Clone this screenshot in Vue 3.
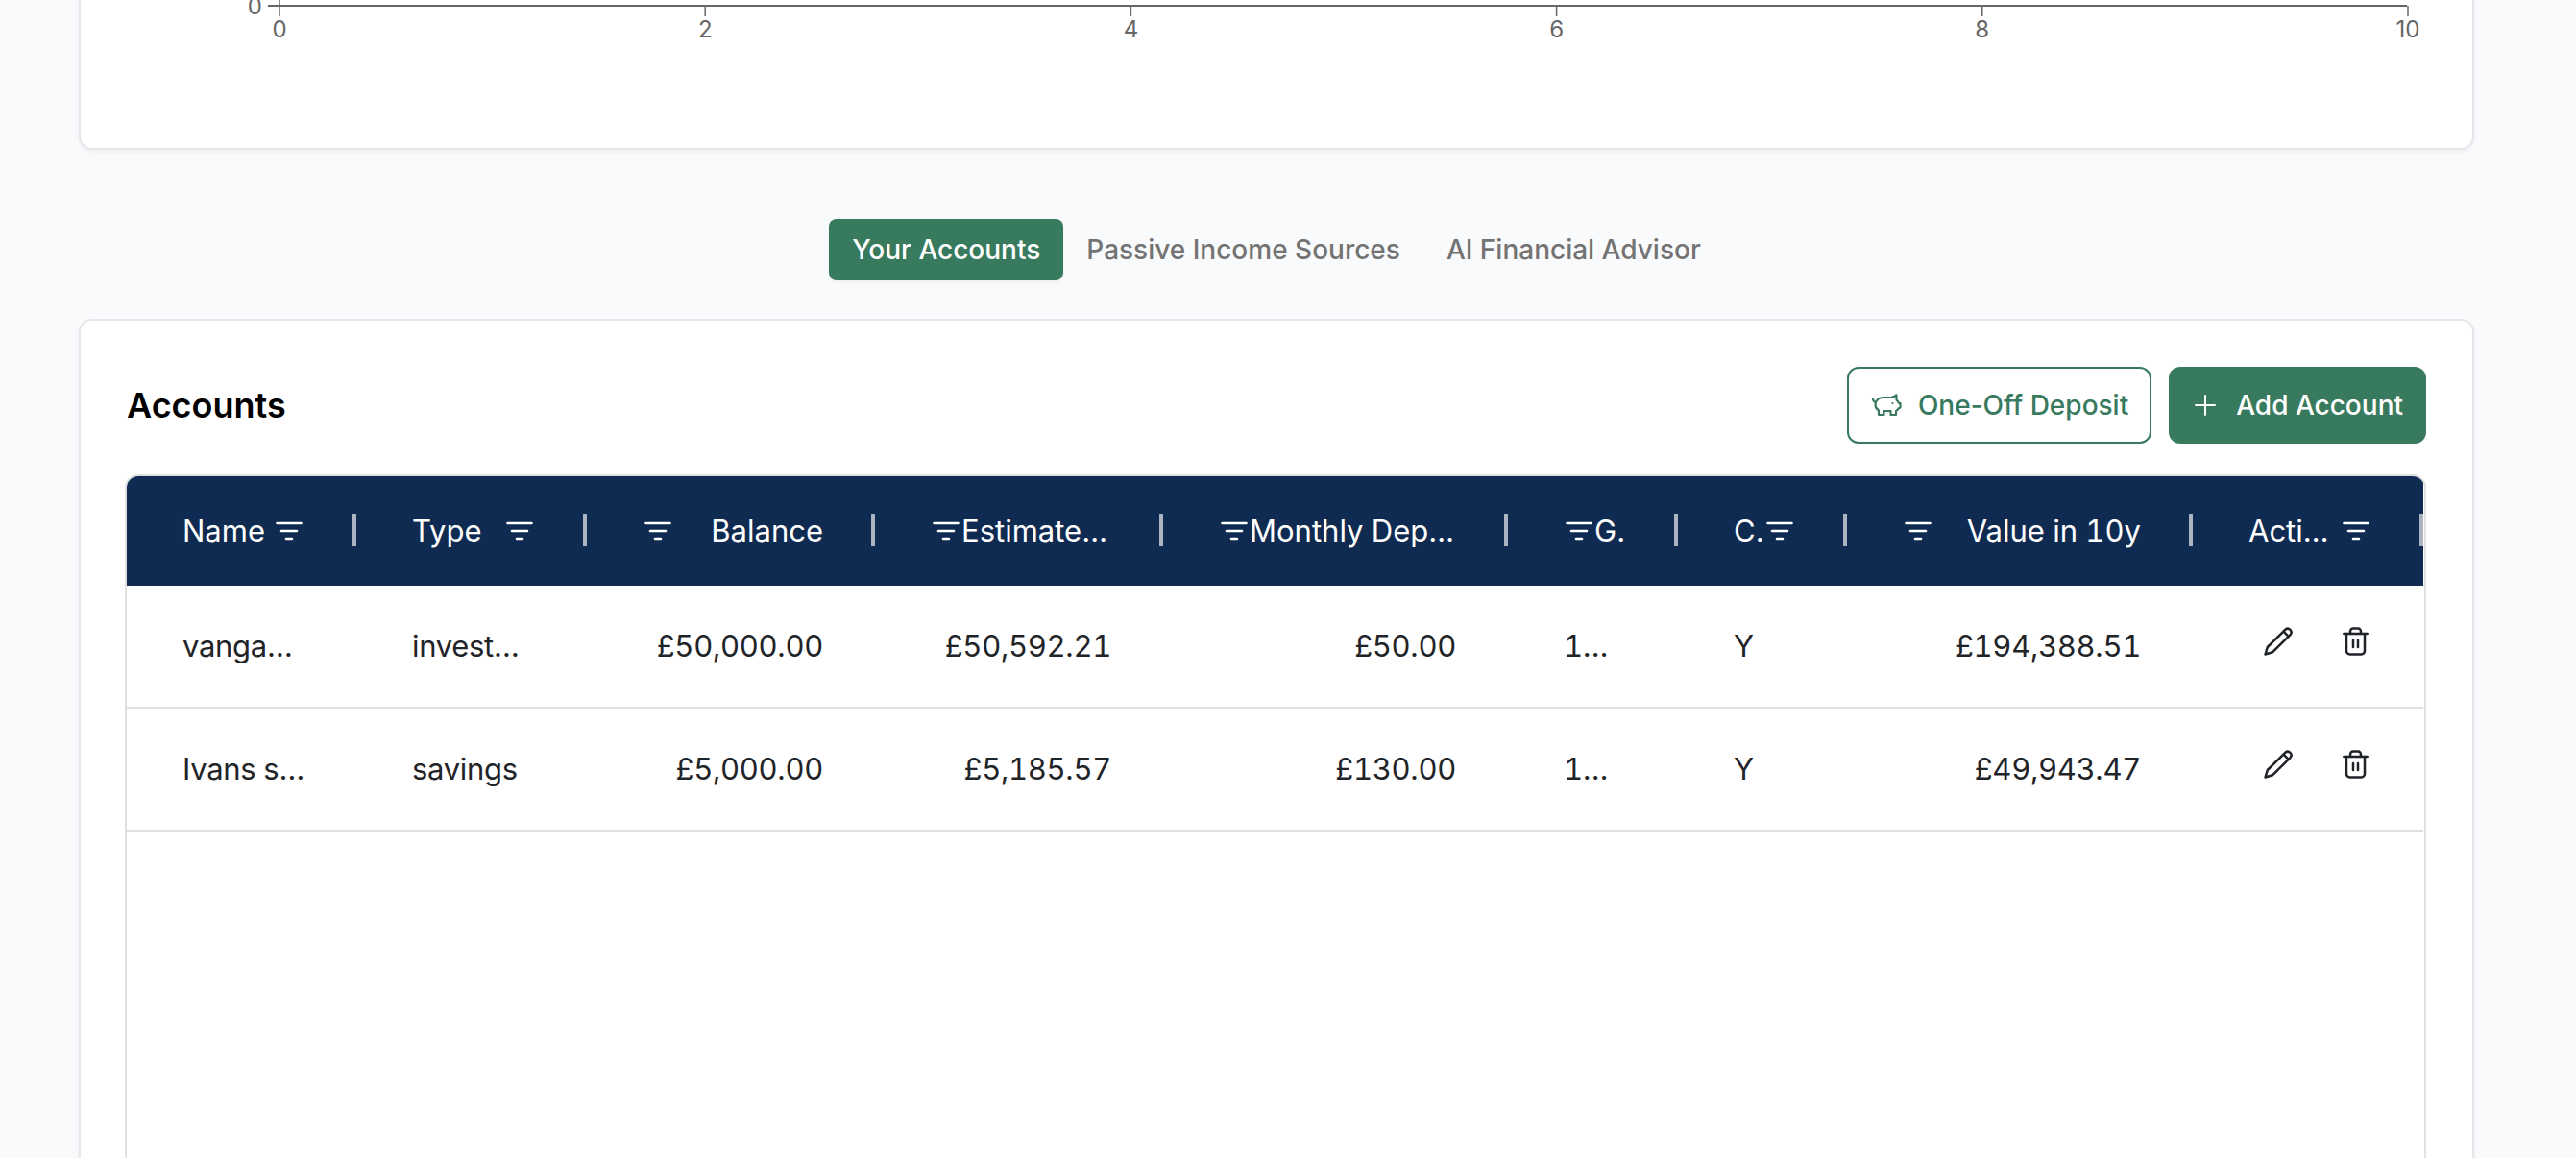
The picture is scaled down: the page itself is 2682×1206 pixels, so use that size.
<template>
  <div class="page">
    <section class="card chart-card">
      <svg class="chart" width="2490" height="60" viewBox="0 0 2490 60">
        <line x1="195" y1="24" x2="2422" y2="24" class="axis" />
        <line x1="207" y1="0" x2="207" y2="24" class="tick" />
        <text x="189" y="33" text-anchor="end" class="tick-label">0</text>
        <g v-for="(t, i) in xTicks" :key="t">
          <line :x1="207 + i * 443.2" y1="24" :x2="207 + i * 443.2" y2="35" class="tick" />
          <text :x="207 + i * 443.2" y="57" text-anchor="middle" class="tick-label">{{ t }}</text>
        </g>
      </svg>
    </section>

    <nav class="tabs">
      <button v-for="tab in tabs" :key="tab" class="tab" :class="{ active: tab === activeTab }">{{ tab }}</button>
    </nav>

    <section class="card accounts-card">
      <div class="accounts-head">
        <h2>Accounts</h2>
        <div class="actions">
          <button class="btn outline">
            <svg width="34" height="24" viewBox="-2 -1 34 24" fill="none" stroke="currentColor" stroke-width="2.200" stroke-linecap="round" stroke-linejoin="round">
              <path d="M25.500 1v4.500c1 1 2 2 2.500 3.500h1.500v4.500l-2 1c-.5 1-1.500 2-2.500 2.500v4h-5.500v-4h-7v4H7v-4.500c-2.500-1.500-3.500-3.500-3.500-6 0-4 3.500-7.500 7.500-7.500h8c2 0 4.500-1 6.500-2.500z" />
              <path d="M1 4c0 2 1 3.500 2.800 4" />
              <path d="M21.500 9v.01" />
            </svg>
            One-Off Deposit
          </button>
          <button class="btn solid">
            <svg width="22" height="22" viewBox="0 0 22 22" fill="none" stroke="currentColor" stroke-width="2" stroke-linecap="round">
              <path d="M11 1v20M1 11h20" />
            </svg>
            Add Account
          </button>
        </div>
      </div>

      <div class="table-wrap">
        <table>
          <colgroup>
            <col v-for="c in columns" :key="c.label" :style="{ width: c.width + 'px' }" />
          </colgroup>
          <thead>
            <tr>
              <th v-for="c in columns" :key="c.label" :class="{ right: c.right }">
                <div class="th-inner">
                  <span class="th-label">{{ c.label }}</span>
                  <svg class="filter" width="28" height="20" viewBox="0 0 28 20" fill="none" stroke="currentColor" stroke-width="2.600" stroke-linecap="round">
                    <path d="M1.500 2h25M6 10h16M11 18h6" />
                  </svg>
                </div>
              </th>
            </tr>
          </thead>
          <tbody>
            <tr v-for="row in rows" :key="row.name">
              <td class="name"><span class="cell">{{ row.name }}</span></td>
              <td><span class="cell">{{ row.type }}</span></td>
              <td class="num"><span class="cell">{{ row.balance }}</span></td>
              <td class="num"><span class="cell">{{ row.estimated }}</span></td>
              <td class="num"><span class="cell">{{ row.monthly }}</span></td>
              <td><span class="cell">{{ row.growth }}</span></td>
              <td><span class="cell">Y</span></td>
              <td class="num"><span class="cell">{{ row.value }}</span></td>
              <td class="row-actions">
                <div class="icons">
                  <svg width="30" height="30" viewBox="0 0 30 30" fill="none" stroke="currentColor" stroke-width="2.500" stroke-linejoin="round" stroke-linecap="round">
                    <path d="M1.500 28.500 3.800 21 22.500 2.600a3.700 3.700 0 0 1 5.200 5.200L9 26.300z" />
                    <path d="M20.500 4.600l5.200 5.200" />
                  </svg>
                  <svg width="27" height="30" viewBox="0 0 27 30" fill="none" stroke="currentColor" stroke-width="2.500" stroke-linecap="round" stroke-linejoin="round">
                    <path d="M1.300 7h24.400" />
                    <path d="M8 7V4.500a3 3 0 0 1 3-3h5a3 3 0 0 1 3 3V7" />
                    <path d="M4 7v18a3.500 3.500 0 0 0 3.500 3.500h12a3.500 3.500 0 0 0 3.500-3.500V7" />
                    <path d="M11 14v7M16 14v7" />
                  </svg>
                </div>
              </td>
            </tr>
          </tbody>
        </table>
      </div>
    </section>
  </div>
</template>

<script setup>
const xTicks = [0, 2, 4, 6, 8, 10];
const tabs = ['Your Accounts', 'Passive Income Sources', 'AI Financial Advisor'];
const activeTab = 'Your Accounts';

const columns = [
  { label: 'Name', width: 239 },
  { label: 'Type', width: 240 },
  { label: 'Balance', width: 300, right: true },
  { label: 'Estimated Balance', width: 300, right: true },
  { label: 'Monthly Deposit', width: 359, right: true },
  { label: 'Growth', width: 177, right: true },
  { label: 'Contributing', width: 176 },
  { label: 'Value in 10y', width: 360, right: true },
  { label: 'Actions', width: 240 },
];

const rows = [
  {
    name: 'vangaurd',
    type: 'investment',
    balance: '£50,000.00',
    estimated: '£50,592.21',
    monthly: '£50.00',
    growth: '12.00%',
    value: '£194,388.51',
  },
  {
    name: 'Ivans savings',
    type: 'savings',
    balance: '£5,000.00',
    estimated: '£5,185.57',
    monthly: '£130.00',
    growth: '15.00%',
    value: '£49,943.47',
  },
];
</script>

<style>
html,
body {
  margin: 0;
  height: 1206px;
  overflow: hidden;
  background: #f9fafb;
}
</style>

<style scoped>
.page {
  padding: 0 106px 0 82px;
  font-family: Inter, 'Liberation Sans', sans-serif;
}

.card {
  background: #fff;
  border: 2px solid #e5e7eb;
  border-radius: 14px;
  box-shadow: 0 2px 4px rgba(0, 0, 0, 0.05);
}

.chart-card {
  margin-top: -20px;
  height: 172px;
}

.chart {
  display: block;
}

.axis {
  stroke: #666;
  stroke-width: 2;
}

.tick {
  stroke: #666;
  stroke-width: 1.5;
}

.tick-label {
  fill: #666;
  font-size: 24px;
}

.tabs {
  display: flex;
  justify-content: center;
  margin: 72px 0 40px;
}

.tab {
  height: 64px;
  padding: 0 24px;
  border: 0;
  border-radius: 8px;
  background: transparent;
  color: #737373;
  font: 500 28px Inter, sans-serif;
}

.tab.active {
  background: #387a5d;
  color: #fff;
  box-shadow: 0 2px 4px rgba(0, 0, 0, 0.05);
}

.accounts-card {
  padding: 48px 48px 0 46px;
  height: 1000px;
}

.accounts-head {
  display: flex;
  justify-content: space-between;
  align-items: center;
  margin-bottom: 32px;
  padding-left: 2px;
}

h2 {
  margin: 0;
  font-size: 36px;
  font-weight: 600;
  color: #000;
}

.actions {
  display: flex;
  gap: 18px;
}

.btn {
  display: flex;
  align-items: center;
  height: 80px;
  border-radius: 12px;
  font: 500 28px Inter, sans-serif;
  box-sizing: border-box;
}

.outline {
  gap: 16px;
  padding: 0 22px;
  border: 2px solid #387a5d;
  background: #fff;
  color: #387a5d;
}

.solid {
  gap: 21px;
  padding: 0 24px 0 27px;
  border: 0;
  background: #387a5d;
  color: #fff;
}

.table-wrap {
  border: 2px solid #e0e0e0;
  border-radius: 14px 14px 0 0;
  overflow: hidden;
  height: 900px;
  box-sizing: border-box;
}

table {
  border-collapse: collapse;
  table-layout: fixed;
  width: 2391px;
  color: #1f2429;
  font-size: 31px;
  font-variant-numeric: tabular-nums;
}

thead tr {
  background: #0f2b52;
  color: #fff;
}

th {
  position: relative;
  height: 114px;
  padding: 0 56px 0 58px;
  font-weight: 400;
  text-align: left;
}

th.right {
  padding: 0 54px 0 60px;
}

th::after {
  content: '';
  position: absolute;
  right: 0;
  top: 39px;
  width: 4px;
  height: 34px;
  background: rgba(255, 255, 255, 0.65);
}

.th-inner {
  display: flex;
  align-items: center;
  justify-content: space-between;
  gap: 2px;
}

th.right .th-inner {
  flex-direction: row-reverse;
}

.th-label {
  min-width: 0;
  padding-bottom: 2px;
  overflow: hidden;
  white-space: nowrap;
  text-overflow: ellipsis;
}

.filter {
  flex: none;
}

td {
  height: 126px;
  padding: 0 56px 0 58px;
  border-bottom: 2px solid #e0e0e0;
  letter-spacing: -0.3px;
}

td.name {
  padding-right: 53px;
}

td.num {
  padding-right: 54px;
  text-align: right;
}

.cell {
  display: block;
  padding-bottom: 2px;
  overflow: hidden;
  white-space: nowrap;
  text-overflow: ellipsis;
}

.icons {
  display: flex;
  justify-content: flex-end;
  gap: 52px;
  padding: 0 1px 10px 0;
  color: #1f2328;
}
</style>
